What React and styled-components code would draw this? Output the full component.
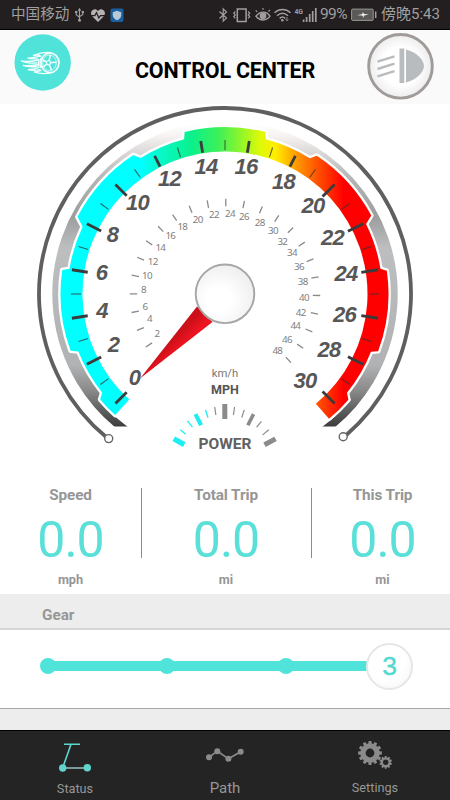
import React, { useState } from 'react';
import styled, { createGlobalStyle } from 'styled-components';

const teal = '#50e3da';

const GlobalStyle = createGlobalStyle`
    body {
        margin: 0;
        background: #fff;
        font-family: Roboto, 'Noto Sans CJK SC', sans-serif;
    }
`;

const Layout = styled.div`
    display: flex;
    flex-direction: column;
    width: 450px;
    height: 800px;
    overflow: hidden;
    background: #fff;
`;

/* 상태바 */
const StatusBar = styled.div`
    display: flex;
    align-items: center;
    justify-content: space-between;
    box-sizing: border-box;
    height: 30px;
    padding: 0 10px 0 11px;
    background: #231f20;
    border-bottom: 1px solid #000;
    color: #a09e9e;
`;

const StatusGroup = styled.div`
    display: flex;
    align-items: center;
    height: 31px;

    svg {
        display: block;
        flex: none;
    }
`;

const StatusText = styled.span`
    width: ${(props) => props.$width}px;
    margin-left: ${(props) => props.$gap || 0}px;
    font-size: ${(props) => props.$size || 15}px;
    line-height: 29px;
    letter-spacing: ${(props) => props.$spacing || 0}px;
    white-space: nowrap;
`;

const Header = styled.header`
    display: flex;
    align-items: center;
    justify-content: space-between;
    box-sizing: border-box;
    height: 74px;
    padding: 0 15.5px 0 13.5px;
    background: #fafafa;
`;

const LogoButton = styled.div`
    width: 57px;
    height: 57px;
    margin-bottom: 10px;
    padding-right: 12px;
`;

const Title = styled.h1`
    margin: 8px 0 0;
    font-size: 21.5px;
    font-weight: 700;
    line-height: 26px;
    letter-spacing: -0.2px;
    color: #000;
    white-space: nowrap;
`;

const LightButton = styled.div`
    width: 67px;
    height: 67px;
    margin-bottom: 1px;
`;

const GaugeArea = styled.section`
    height: 366px;

    svg {
        display: block;
    }
`;

const Stats = styled.section`
    display: grid;
    grid-template-columns: 141px 170px 143px;
    height: 106px;
    padding-top: 18px;
`;

const Stat = styled.div`
    position: relative;
    display: flex;
    flex-direction: column;
    align-items: center;
    height: 106px;
    color: #969696;
    font-weight: 700;
`;

const StatLabel = styled.div`
    margin-top: -2px;
    font-size: 15.3px;
    line-height: 19px;
    letter-spacing: -0.1px;
`;

const StatValue = styled.div`
    margin-top: 8px;
    font-size: 50px;
    font-weight: 400;
    line-height: 54px;
    letter-spacing: -1px;
    color: #5ae0d8;
`;

const StatUnit = styled.div`
    margin-top: 5px;
    font-size: 12.7px;
    line-height: 16px;
`;

const Divider = styled.i`
    position: absolute;
    top: 0;
    right: -1px;
    width: 1px;
    height: 70px;
    background: #8c8c8c;
`;

const GearTitle = styled.div`
    box-sizing: border-box;
    height: 36px;
    padding: 4px 0 0 42px;
    background: #ededed;
    border-bottom: 2px solid #d6d6d6;
    color: #969696;
    font-size: 15.3px;
    font-weight: 700;
    line-height: 34px;
`;

const GearPanel = styled.div`
    display: flex;
    align-items: center;
    box-sizing: border-box;
    height: 79px;
    padding: 0 37px 6px 39.5px;
    border-bottom: 1px solid #a8a8a8;
`;

const Track = styled.div`
    display: flex;
    align-items: center;
    flex: 1;
`;

const Stop = styled.button`
    width: 16px;
    height: 16px;
    padding: 0;
    border: 0;
    border-radius: 50%;
    background: ${teal};
`;

const Rail = styled.div`
    flex: ${(props) => (props.$last ? 76 : 107)} 0 0;
    height: 10px;
    margin: 0 -2px;
    background: ${teal};
`;

const Thumb = styled.div`
    box-sizing: border-box;
    width: 47px;
    height: 47px;
    border: 2px solid #e6e6e6;
    border-radius: 50%;
    background: radial-gradient(circle at 40% 35%, #fff 50%, #f4f4f4);
    color: #52d9d0;
    font-family: 'Liberation Sans', Arial, sans-serif;
    font-size: 26.5px;
    line-height: 43px;
    text-align: center;
    -webkit-text-stroke: 0.4px #52d9d0;
`;

const Spacer = styled.div`
    height: 21px;
    background: #ededed;
`;

const TabBar = styled.nav`
    display: grid;
    grid-template-columns: repeat(3, 1fr);
    box-sizing: border-box;
    height: 70px;
    border-top: 1px solid #000;
    background: #242424;
`;

const Tab = styled.div`
    display: flex;
    flex-direction: column;
    align-items: center;
    color: #979797;
    font-size: ${(props) => props.$size || 12.7}px;
    line-height: 18px;

    svg {
        display: block;
        margin: 9px 0 ${(props) => props.$gap || 3}px;
    }
`;

/* ---------- gauge ---------- */
const CX = 225;
const CY = 294;

const polar = (r, deg) => {
    const a = (deg * Math.PI) / 180;
    return [CX + r * Math.cos(a), CY + r * Math.sin(a)];
};

const point = (r, deg) =>
    polar(r, deg)
        .map((n) => n.toFixed(2))
        .join(' ');

const arc = (r, from, to) =>
    `M${point(r, from)} A${r} ${r} 0 ${to - from > 180 ? 1 : 0} 1 ${point(r, to)}`;

// [outer radius, start, end]
const steps = [
    [163.5, 132.2, 139.8],
    [157.5, 141.2, 158.6],
    [164.5, 159.8, 188.4],
    [157.5, 189.2, 205.3],
    [166.5, 207.6, 236.6],
    [160, 238.2, 255.2],
    [167, 256, 284],
    [160, 284.8, 302],
    [166, 303.6, 331.8],
    [157.5, 333.6, 350.8],
    [163.5, 351.8, 380.5],
    [157, 381.6, 399],
    [162.5, 400.6, 410.2],
];

const bandPath = (() => {
    let d = '';
    steps.forEach(([r, from, to], i) => {
        d += `${i ? 'L' : 'M'}${point(r, from)} A${r} ${r} 0 0 1 ${point(r, to)} `;
    });
    return `${d}L${point(142.5, 410.4)} A142.5 142.5 0 1 0 ${point(142.5, 132.2)} Z`;
})();

const mphLabels = [
    [135, 377],
    [114, 344],
    [102.5, 310],
    [102, 272],
    [113, 234],
    [138, 202],
    [170, 178],
    [206.5, 166.5],
    [246.5, 166.5],
    [284, 181],
    [313.5, 205.5],
    [333, 237],
    [346.5, 273.5],
    [345, 314],
    [329.5, 349.5],
    [305.5, 380.5],
];

const kmhLabels = [
    [157, 333],
    [149.5, 318.5],
    [145, 306],
    [143.5, 289.5],
    [147, 275.3],
    [152.7, 261.7],
    [160.3, 247.3],
    [170.3, 235.3],
    [182.3, 226.7],
    [197.7, 219.3],
    [214, 214.3],
    [230, 213.3],
    [244, 216.3],
    [259.7, 222.3],
    [273, 230.3],
    [282.3, 241.3],
    [292, 252.3],
    [299, 266.7],
    [302.7, 281.5],
    [304, 297.3],
    [300.7, 312.3],
    [295.3, 325.5],
    [287, 339],
    [277.3, 350.5],
];

// [x, y, rotate, width, length]
const powerTicks = [
    [179, 441.7, -61, 5.2, 12],
    [183, 432, -50, 1.2, 7],
    [190, 424, -38, 1.2, 8],
    [198.3, 419.7, -27, 4, 12.5],
    [206.7, 413.7, -18, 1.4, 8],
    [215.3, 411, -8, 1.2, 8],
    [224.8, 411.5, 0, 5, 15],
    [234, 411, 8, 1.2, 8],
    [243, 413.7, 18, 1.2, 8],
    [250.7, 419.7, 27, 3.6, 12.5],
    [259, 424.3, 40, 1.2, 7.5],
    [265.7, 432.3, 50, 1.2, 8],
    [270, 441.8, 62, 5, 12.5],
];

const Tick = ({ r1, r2, deg, ...rest }) => {
    const [x1, y1] = polar(r1, deg);
    const [x2, y2] = polar(r2, deg);
    return <line x1={x1} y1={y1} x2={x2} y2={y2} {...rest} />;
};

const Gauge = () => (
    <svg width="450" height="366" viewBox="0 104 450 366">
        <defs>
            <linearGradient id="band" gradientUnits="userSpaceOnUse" x1="130" x2="350" y1="0" y2="0">
                <stop offset="0.05" stopColor="#00ffff" />
                <stop offset="0.14" stopColor="#08f8c8" />
                <stop offset="0.28" stopColor="#0af08c" />
                <stop offset="0.4" stopColor="#3cf05a" />
                <stop offset="0.5" stopColor="#8cf52c" />
                <stop offset="0.59" stopColor="#dcfa08" />
                <stop offset="0.66" stopColor="#ffee00" />
                <stop offset="0.74" stopColor="#ffa800" />
                <stop offset="0.84" stopColor="#ff5a00" />
                <stop offset="0.97" stopColor="#ff0000" />
            </linearGradient>
            <linearGradient id="metal" gradientUnits="userSpaceOnUse" x1="0" x2="0" y1="118" y2="427">
                <stop offset="0.02" stopColor="#fff" />
                <stop offset="0.06" stopColor="#f6f2f1" />
                <stop offset="0.12" stopColor="#d6d4d4" />
                <stop offset="0.2" stopColor="#b4b4b4" />
                <stop offset="0.32" stopColor="#9b9d9e" />
                <stop offset="0.42" stopColor="#bcbebf" />
                <stop offset="0.66" stopColor="#b4b6b8" />
                <stop offset="0.8" stopColor="#b0b2b4" />
                <stop offset="0.88" stopColor="#8b8b8b" />
                <stop offset="0.95" stopColor="#5c5c5c" />
                <stop offset="1" stopColor="#3c3c3c" />
            </linearGradient>
            <linearGradient id="needle" x1="0" y1="0" x2="1" y2="1">
                <stop offset="0.45" stopColor="#cc1019" />
                <stop offset="0.56" stopColor="#ec1420" />
            </linearGradient>
            <radialGradient id="hub" cx="0.4" cy="0.6" r="0.7">
                <stop offset="0.3" stopColor="#fff" />
                <stop offset="1" stopColor="#ececec" />
            </radialGradient>
            <clipPath id="tail">
                <rect x="0" y="104" width="450" height="322.6" />
            </clipPath>
        </defs>

        {/* outer rim */}
        <path d={arc(186, 129.5, 409.5)} fill="none" stroke="#5f5f5f" strokeWidth="3.8" />
        <circle cx="108.7" cy="438.6" r="4" fill="#fff" stroke="#666" strokeWidth="1.4" />
        <circle cx="343.2" cy="436.7" r="4" fill="#fff" stroke="#666" strokeWidth="1.4" />

        {/* metal ring and coloured band */}
        <g clipPath="url(#tail)">
            <path d={arc(168.7, 126, 414)} fill="none" stroke="url(#metal)" strokeWidth="8" />
            <path d={arc(162, 140, 400)} fill="none" stroke="url(#metal)" strokeWidth="12" />
        </g>
        <path d={bandPath} fill="url(#band)" stroke="#fff" strokeWidth="4.6" strokeLinejoin="round" />
        <path d={bandPath} fill="url(#band)" />

        {mphLabels.map((_, i) => (
            <React.Fragment key={i}>
                <Tick
                    deg={135 + i * 18}
                    r1={i > 5 && i < 10 ? 143 : i > 9 ? 138 : 139}
                    r2={155}
                    stroke="#3b3b3b"
                    strokeWidth="2.8"
                />
                {i < 15 && (
                    <Tick deg={144 + i * 18} r1={144} r2={154} stroke="#333" strokeWidth="1.1" opacity="0.75" />
                )}
            </React.Fragment>
        ))}

        {mphLabels.map(([x, y], i) => (
            <text
                key={i}
                x={x - 0.5}
                y={y + 7.9}
                fill="#575757"
                fontFamily="'Liberation Sans', Arial, sans-serif"
                fontSize="22"
                fontWeight="700"
                fontStyle="italic"
                letterSpacing="-0.8"
                textAnchor="middle"
            >
                {i * 2}
            </text>
        ))}

        {/* km/h scale */}
        {kmhLabels.map(([x, y], i) => (
            <React.Fragment key={i}>
                <Tick deg={146.2 + i * 11.3} r1={87.8} r2={95.2} stroke="#8a8a8a" strokeWidth="1.3" />
                <text
                    x={x}
                    y={y + 3.5}
                    fill="#808080"
                    fontFamily="'Noto Sans', sans-serif"
                    fontSize="9.8"
                    letterSpacing="-0.7"
                    textAnchor="middle"
                >
                    {(i + 1) * 2}
                </text>
            </React.Fragment>
        ))}

        <path d="M140 378.5 L197 306.5 L212.5 322 Z" fill="url(#needle)" />
        <circle cx="225" cy="293.8" r="29.3" fill="url(#hub)" stroke="#a6a6a6" strokeWidth="1.9" />

        <text x="225" y="377" fill="#777" fontSize="11.3" textAnchor="middle">
            km/h
        </text>
        <text x="225" y="394" fill="#555" fontSize="12.5" fontWeight="700" textAnchor="middle">
            MPH
        </text>

        {powerTicks.map(([x, y, deg, w, h], i) => (
            <rect
                key={i}
                x={x - w / 2}
                y={y - h / 2}
                width={w}
                height={h}
                fill={i < 5 ? '#1ceef2' : '#8b8b8b'}
                transform={`rotate(${deg} ${x} ${y})`}
            />
        ))}
        <text x="225" y="449" fill="#616161" fontSize="15.5" fontWeight="700" textAnchor="middle">
            POWER
        </text>
    </svg>
);

/* ---------- icons ---------- */
const LeftStatusIcons = () => (
    <svg width="52" height="18" viewBox="73 6 52 18" fill="none" stroke="#a09e9e">
        <path d="M79.5 10v10M76.2 12.5v2.3l3.3 2.4M82.8 12.5v2l-3.3 2.2" strokeWidth="1.1" />
        <path d="M79.5 7.8l1.8 3h-3.6z" fill="#a09e9e" stroke="none" />
        <circle cx="79.5" cy="20.3" r="1.5" fill="#a09e9e" stroke="none" />
        <path d="M75 11h2.4v2H75zM81.7 11H84v2h-2.3z" fill="#a09e9e" stroke="none" />
        <path
            d="M98 22l-5.8-5.7c-3.6-4.2 2-9.8 5.8-5.3 3.8-4.5 9.4 1.1 5.8 5.3z"
            fill="#b4b2b2"
            stroke="none"
        />
        <path d="M90.5 15.6h4.3l1.7-3 2.3 5.5 1.7-2.5h5" stroke="#231f20" strokeWidth="1.2" />
        <rect x="110.5" y="8.5" width="13" height="13.5" rx="2" fill="#1a609f" stroke="none" />
        <path d="M117 10.8l4.2 1.5v3c0 2.5-2 4-4.2 5-2.2-1-4.2-2.5-4.2-5v-3z" fill="#b9c9d6" stroke="none" />
    </svg>
);

const RightStatusIcons = () => (
    <svg width="100" height="18" viewBox="218 6 100 18" fill="none" stroke="#a09e9e" strokeWidth="1.2">
        <path d="M219.5 11.5l7 6.5-3.3 3.2V8.800l3.300 3.200-7 6.500" />
        <rect x="237.3" y="9" width="8.8" height="12.5" strokeWidth="1.5" />
        <path d="M235.3 11.5l-1.5 1.7 1.5 1.7-1.5 1.7 1.5 1.7M248.2 11.5l1.5 1.7-1.5 1.7 1.5 1.7-1.5 1.7" />
        <path d="M256 16.2c4-5.5 10.5-5.5 14 0-3.5 5-10 5-14 0z" strokeWidth="1.4" />
        <circle cx="263" cy="15.8" r="2.8" fill="#a09e9e" />
        <path d="M257.2 11.8l-1.5-1.5M263 9.8V8M268.5 11.5l1.5-1.6" />
        <path
            d="M274.5 12.8c4.8-4.3 11.2-4.3 16 0M277 15.7c3.4-3 7.6-3 11 0M279.600 18.400c1.800-1.600 4-1.600 5.600 0"
            strokeWidth="1.5"
        />
        <circle cx="282.3" cy="20.3" r="1.3" fill="#a09e9e" stroke="none" />
        <path d="M287 17v3.5M285.7 19.3l1.3 1.5 1.3-1.5" strokeWidth="0.8" />
        <text x="294.5" y="13.8" fill="#a09e9e" stroke="none" fontSize="6.8" fontWeight="700" letterSpacing="-0.2">
            4G
        </text>
        <path d="M303.6 22v-2.5M306.6 22v-5M309.7 22v-8M312.7 22V11M315.8 22V8" strokeWidth="1.7" />
    </svg>
);

const BatteryIcon = () => (
    <svg width="26" height="13" viewBox="0 0 26 13">
        <rect x="0.6" y="1.1" width="21.6" height="11.3" rx="1" fill="#5b5858" stroke="#989696" />
        <path d="M6 7.2l5.5-1.3v-2l1.800 2 4.200.3-4.700 1.600v2l-1.700-2.300z" fill="#eee" />
        <path d="M24.7 3.5v6.5" stroke="#a09e9e" strokeWidth="1.5" />
    </svg>
);

const WheelLogo = () => (
    <svg width="57" height="57" viewBox="13.5 33.5 57 57">
        <circle cx="42.2" cy="62" r="28.2" fill={teal} />
        <g fill="none" stroke="#f2fffe">
            <ellipse cx="49.5" cy="62.3" rx="9" ry="9.8" strokeWidth="1.7" />
            <ellipse cx="49" cy="62.3" rx="6.8" ry="7.8" strokeWidth="0.7" />
            <path
                d="M48 62.3L42 59.5M48 62.3l-5.5 4M48 62.3l2-8M48 62.3l3 7.5M48 62.3l8-0.5"
                strokeWidth="1.6"
            />
            <circle cx="48" cy="62.3" r="2" fill={teal} strokeWidth="1.1" />
            <path
                d="M51 52.2c-6-.8-12 .2-18.500 2.800 3-.5 5-.3 7-.2M41 55.500c-5 .8-9 2-14 2.200 3 1 6 .8 10 .7M38.500 59.500c-6 1.500-12 1.800-18 .8 4.500 2.500 10 2.700 16.500 2M38 64c-5 1-10 1.500-15.500 1 4.500 1.800 9 1.500 14.500 1M39 67c-5 1.500-8 2-11.500 2.200 4 1 8 .6 12.500 0M41 70c-2.500.8-5 1.300-7.500 1.500 5 1.600 11 2 17 .8"
                strokeWidth="1.3"
            />
            <path d="M40.5 57.5c-1.3 3-1.3 7 0 10M38.5 58.5c-.8 2.500-.8 5.500 0 8" strokeWidth="1.1" />
        </g>
    </svg>
);

const HeadlightIcon = () => (
    <svg width="67" height="67" viewBox="367.5 33 67 67">
        <defs>
            <radialGradient id="lamp">
                <stop offset="0.6" stopColor="#fff" />
                <stop offset="1" stopColor="#ececec" />
            </radialGradient>
        </defs>
        <circle cx="401" cy="66.3" r="31.8" fill="url(#lamp)" stroke="#a09b98" strokeWidth="2.9" />
        <g stroke="#b9bcbe" strokeWidth="2.4">
            <path d="M378 61.6l17-5.3M378 69l17-5.3M378 76.4l17-5.3" />
        </g>
        <rect x="400" y="48.5" width="4.8" height="34.5" fill="#b9bcbe" />
        <path d="M406.5 49.5C417 52 424.5 60 424.5 66s-7.5 14-18 16.5z" fill="#b9bcbe" />
    </svg>
);

const gearPath = (cx, cy, outer, inner, teeth) => {
    const pts = [];
    const unit = (Math.PI * 2) / teeth;
    for (let i = 0; i < teeth; i += 1) {
        [
            [-0.34, inner],
            [-0.22, outer],
            [0.22, outer],
            [0.34, inner],
        ].forEach(([k, r]) => {
            const a = (i + k) * unit - Math.PI / 2;
            pts.push(`${(cx + r * Math.cos(a)).toFixed(2)} ${(cy + r * Math.sin(a)).toFixed(2)}`);
        });
    }
    return `M${pts.join('L')}Z`;
};

const ScooterIcon = () => (
    <svg width="32" height="36" viewBox="59 740 32 36" fill="none" stroke="#5fd5cd">
        <path d="M64 744.2h16M71 744.2l-8.3 23.6" strokeWidth="1.6" />
        <path d="M62.7 768h24.6" strokeWidth="1.6" stroke="#8fb9b6" />
        <circle cx="62.7" cy="768" r="3.7" fill="#5fd5cd" stroke="none" />
        <circle cx="87.3" cy="767.8" r="3.7" fill="#5fd5cd" stroke="none" />
    </svg>
);

const PathIcon = () => (
    <svg width="40" height="36" viewBox="205 740 40 36" fill="#8b8b8b">
        <path d="M209 757.3l8.3-6.2 11.1 7.7 12.3-7" fill="none" stroke="#8b8b8b" strokeWidth="1.6" />
        <circle cx="209" cy="757.3" r="3" />
        <circle cx="217.3" cy="751.2" r="3" />
        <circle cx="228.4" cy="758.8" r="3" />
        <circle cx="240.7" cy="751.7" r="3" />
    </svg>
);

const SettingsIcon = () => (
    <svg width="36" height="36" viewBox="357 740 36 36" fill="#8b8b8b">
        <path d={gearPath(370, 753, 12, 9.6, 12)} />
        <circle cx="370" cy="753" r="4.4" fill="#242424" />
        <path d={gearPath(385.7, 762.3, 6.4, 5, 10)} />
        <circle cx="385.7" cy="762.3" r="2.7" fill="#242424" />
    </svg>
);

const stats = [
    { label: 'Speed', value: '0.0', unit: 'mph' },
    { label: 'Total Trip', value: '0.0', unit: 'mi' },
    { label: 'This Trip', value: '0.0', unit: 'mi' },
];

const GearSlider = () => {
    const [gear, setGear] = useState(3);

    return (
        <Track>
            {[0, 1, 2, 3].map((n) => (
                <React.Fragment key={n}>
                    {n > 0 && <Rail $last={n === 3} />}
                    {n === gear ? <Thumb>{n}</Thumb> : <Stop aria-label={`${n}`} onClick={() => setGear(n)} />}
                </React.Fragment>
            ))}
        </Track>
    );
};

const App = () => {
    return (
        <Layout>
            <GlobalStyle />
            <StatusBar>
                <StatusGroup>
                    <StatusText $width={62} $size={14.6}>
                        中国移动
                    </StatusText>
                    <LeftStatusIcons />
                </StatusGroup>
                <StatusGroup>
                    <RightStatusIcons />
                    <StatusText $width={31} $gap={2} $size={15.5} $spacing={-0.6}>
                        99%
                    </StatusText>
                    <BatteryIcon />
                    <StatusText $width={59} $gap={4}>
                        傍晚5:43
                    </StatusText>
                </StatusGroup>
            </StatusBar>

            <Header>
                <LogoButton>
                    <WheelLogo />
                </LogoButton>
                <Title>CONTROL CENTER</Title>
                <LightButton>
                    <HeadlightIcon />
                </LightButton>
            </Header>

            <GaugeArea>
                <Gauge />
            </GaugeArea>

            <Stats>
                {stats.map((item, index) => (
                    <Stat key={item.label}>
                        <StatLabel>{item.label}</StatLabel>
                        <StatValue>{item.value}</StatValue>
                        <StatUnit>{item.unit}</StatUnit>
                        {index < 2 && <Divider />}
                    </Stat>
                ))}
            </Stats>

            <GearTitle>Gear</GearTitle>
            <GearPanel>
                <GearSlider />
            </GearPanel>
            <Spacer />

            <TabBar>
                <Tab $gap={4}>
                    <ScooterIcon />
                    Status
                </Tab>
                <Tab $size={15}>
                    <PathIcon />
                    Path
                </Tab>
                <Tab>
                    <SettingsIcon />
                    Settings
                </Tab>
            </TabBar>
        </Layout>
    );
};

export default App;
